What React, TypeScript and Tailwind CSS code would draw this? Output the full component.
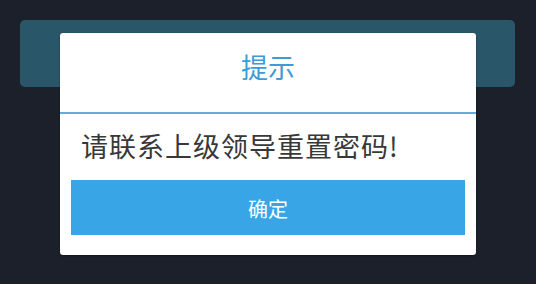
export default function App() {
  return (
    <div
      className="relative h-[284px] w-full overflow-hidden bg-[#1b202a] pt-[20px]"
      style={{ fontFamily: '"Noto Sans CJK SC", "Noto Sans", sans-serif' }}
    >
      {/* page bar behind the dialog */}
      <div className="ml-[20px] mr-[21px] h-[67px] rounded-[5px] bg-[#2a5669]" />

      {/* dialog */}
      <div className="absolute left-[60px] top-[33px] flex h-[222px] w-[416px] flex-col rounded-[3px] bg-white shadow-[0_1px_2px_rgba(0,0,0,0.4)]">
        <div className="flex h-[81px] shrink-0 justify-center border-b-2 border-[#62addb] pt-[20px] text-[27px] leading-none text-[#3e9bd8]">
          提示
        </div>
        <div className="flex h-[66px] shrink-0 items-center px-[21px] pb-[4px] text-[27px] leading-none tracking-[1px] text-[#383838]">
          请联系上级领导重置密码!
        </div>
        <button className="mx-[11px] flex h-[55px] shrink-0 items-center justify-center bg-[#38a6e6] pt-[2px] text-[20px] leading-none text-white">
          确定
        </button>
      </div>
    </div>
  );
}
